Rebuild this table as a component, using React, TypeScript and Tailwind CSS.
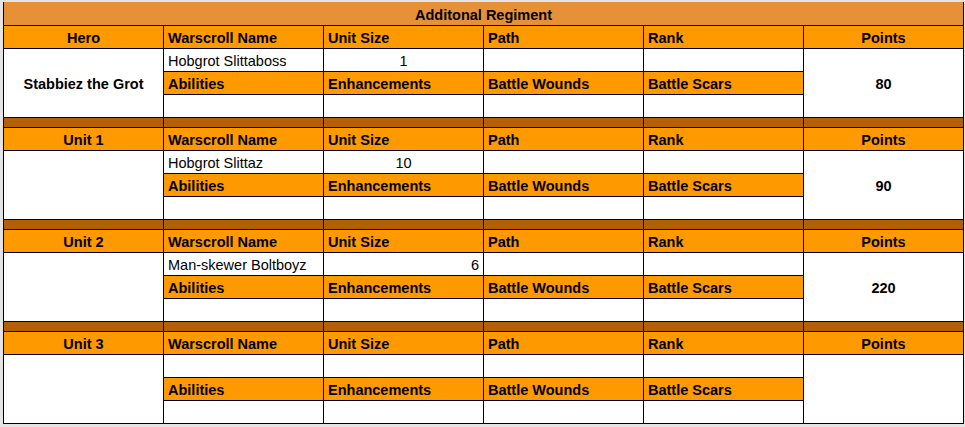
type Block = {
  label: string;
  hero?: string;
  name: string;
  size: string;
  sizeAlign: 'center' | 'right';
  points: string;
};

const blocks: Block[] = [
  { label: 'Hero', hero: 'Stabbiez the Grot', name: 'Hobgrot Slittaboss', size: '1', sizeAlign: 'center', points: '80' },
  { label: 'Unit 1', name: 'Hobgrot Slittaz', size: '10', sizeAlign: 'center', points: '90' },
  { label: 'Unit 2', name: 'Man-skewer Boltboyz', size: '6', sizeAlign: 'right', points: '220' },
  { label: 'Unit 3', name: '', size: '', sizeAlign: 'center', points: '' },
];

const head = 'h-[22px] bg-[#ff9900] font-bold flex items-center px-[4px] pt-[1px]';
const cell = 'h-[22px] bg-white flex items-center px-[4px] pt-[1px]';

const UnitBlock = ({ block, last }: { block: Block; last: boolean }) => (
  <>
    <div className={`${head} justify-center`}>{block.label}</div>
    <div className={head}>Warscroll Name</div>
    <div className={head}>Unit Size</div>
    <div className={head}>Path</div>
    <div className={head}>Rank</div>
    <div className={`${head} justify-center`}>Points</div>

    <div className="row-span-3 bg-white flex items-center justify-center font-bold pt-[1px]">
      {block.hero}
    </div>
    <div className={cell}>{block.name}</div>
    <div className={`${cell} ${block.sizeAlign === 'right' ? 'justify-end' : 'justify-center'}`}>
      {block.size}
    </div>
    <div className={cell}></div>
    <div className={cell}></div>
    <div className="row-span-3 bg-white flex items-center justify-center font-bold pt-[1px]">
      {block.points}
    </div>

    <div className={head}>Abilities</div>
    <div className={head}>Enhancements</div>
    <div className={head}>Battle Wounds</div>
    <div className={head}>Battle Scars</div>

    <div className={cell}></div>
    <div className={cell}></div>
    <div className={cell}></div>
    <div className={cell}></div>

    {!last &&
      [0, 1, 2, 3, 4, 5].map((i) => <div key={i} className="h-[9px] bg-[#b45f06]" />)}
  </>
);

export default function App() {
  return (
    <div
      className="w-[965px] h-[427px] bg-[#e4e4e4] pl-[3px] pt-[2px] text-[14.5px] leading-[16px] text-black overflow-hidden"
      style={{ fontFamily: '"Liberation Sans", Arial, sans-serif' }}
    >
      <div className="w-[961px] grid grid-cols-[repeat(6,159px)] gap-px bg-black px-px pb-px">
        <div className="col-span-6 h-[23px] bg-[#e69138] font-bold flex items-center justify-center pt-[2px]">
          Additonal Regiment
        </div>
        {blocks.map((b, i) => (
          <UnitBlock key={b.label} block={b} last={i === blocks.length - 1} />
        ))}
      </div>
    </div>
  );
}
